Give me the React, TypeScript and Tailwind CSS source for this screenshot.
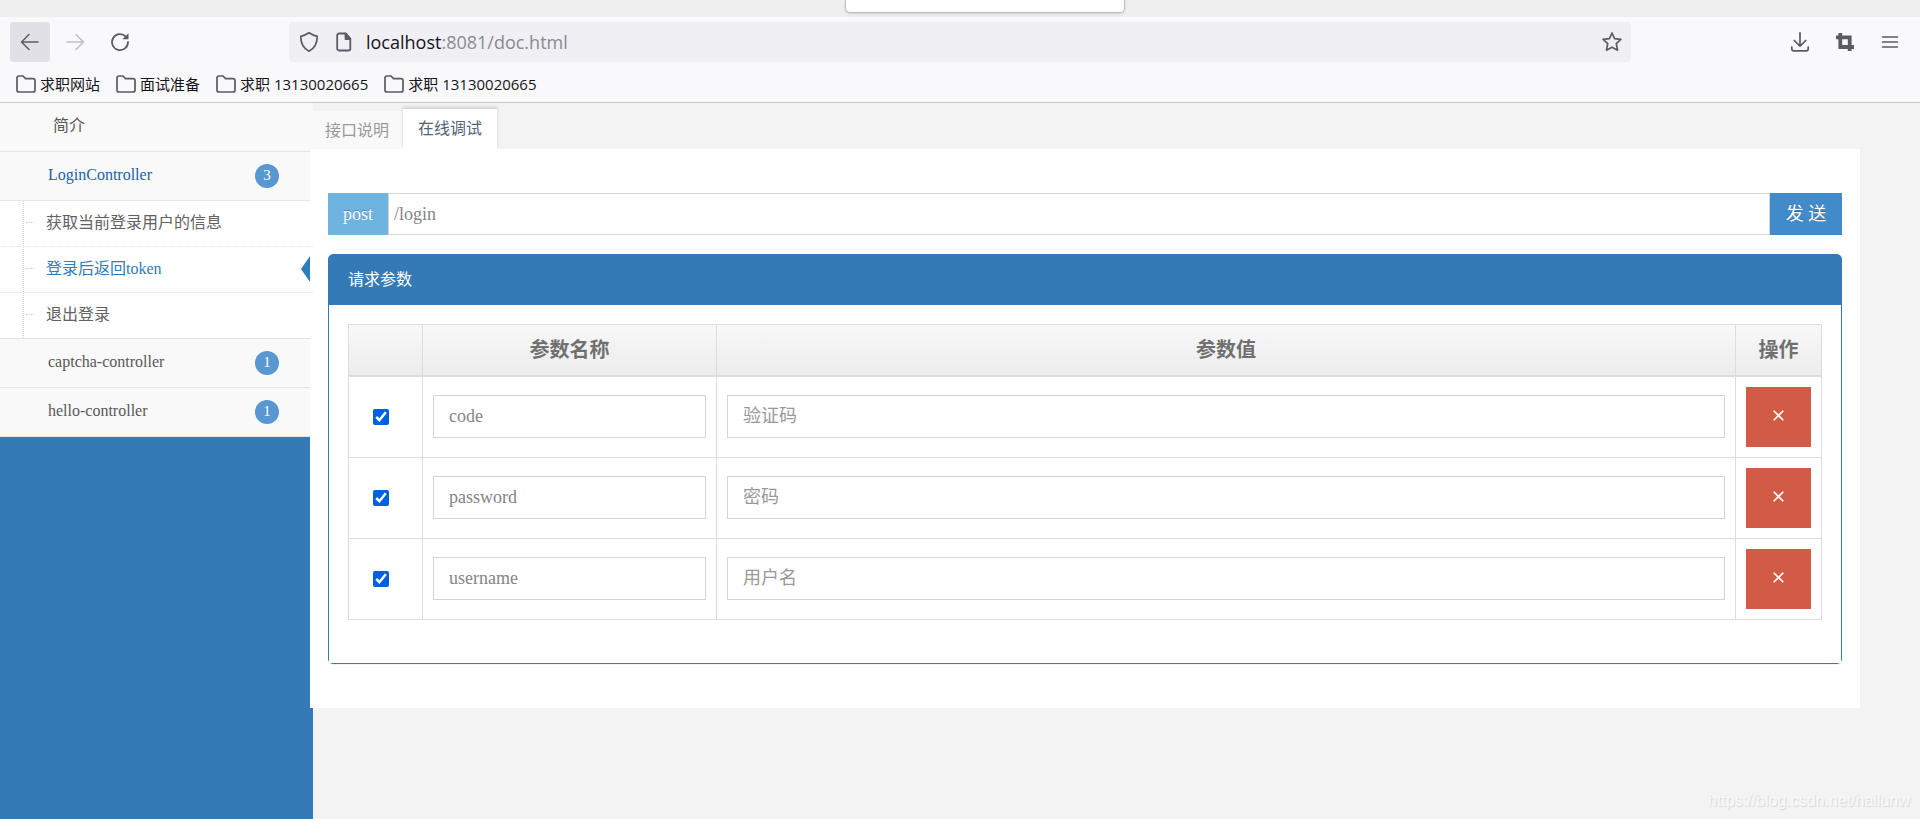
import React, { useState } from "react";

const bookmarks = ["求职网站", "面试准备", "求职 13130020665", "求职 13130020665"];

const endpoints = [
  { name: "获取当前登录用户的信息", active: false },
  { name: "登录后返回token", active: true },
  { name: "退出登录", active: false },
];

const initialParams = [
  { name: "code", hint: "验证码" },
  { name: "password", hint: "密码" },
  { name: "username", hint: "用户名" },
];

function Stroke({ d, size = 20, width = 1.5, className = "" }: { d: string; size?: number; width?: number; className?: string }) {
  return (
    <svg
      width={size}
      height={size}
      viewBox="0 0 20 20"
      fill="none"
      stroke="currentColor"
      strokeWidth={width}
      strokeLinecap="round"
      strokeLinejoin="round"
      className={className}
      aria-hidden="true"
    >
      <path d={d} />
    </svg>
  );
}

function BrowserChrome() {
  return (
    <header className="border-b border-[#cacaca] bg-[#f9f9fb] font-['Open_Sans','Noto_Sans_CJK_SC',sans-serif] text-[#5b5b66]">
      <div className="flex h-[17px] items-start justify-center bg-[#efefef] pl-[50px]">
        <div className="h-[13px] w-[280px] rounded-b-[5px] border border-t-0 border-[#bdbdca] bg-white shadow-sm" />
      </div>
      <div className="flex items-center pt-[5px] pr-[10px] pl-[10px]">
        <div className="flex w-[279px] shrink-0 items-center gap-[5px]">
          <button aria-label="后退" className="flex size-10 items-center justify-center rounded-[4px] bg-[#e0e0e6]">
            <Stroke d="M18 10H2M9 2.500L1.500 10L9 17.500" />
          </button>
          <button aria-label="前进" className="flex size-10 items-center justify-center text-[#bfbfc5]">
            <Stroke d="M2 10H18M11 2.500L18.500 10L11 17.500" />
          </button>
          <button aria-label="刷新" className="flex size-10 items-center justify-center">
            <svg width="20" height="20" viewBox="0 0 20 20" fill="none" stroke="currentColor" strokeWidth="1.800" strokeLinecap="round" aria-hidden="true">
              <path d="M15.600 4.400A8 8 0 1 0 18 10" />
              <path d="M18.500 1.200V7.300H12.400Z" fill="currentColor" stroke="none" />
            </svg>
          </button>
        </div>
        <div className="flex h-10 min-w-0 flex-1 items-center rounded-[4px] bg-[#efeff4] pr-[9px] pl-[10px]">
          <Stroke d="M10 0.800C12.500 2.500 15 3.600 18.200 4.300C18.300 11 16 16 10 19.200C4 16 1.700 11 1.800 4.300C5 3.600 7.500 2.500 10 0.800Z" width={1.700} />
          <svg width="20" height="20" viewBox="0 0 20 20" fill="none" stroke="currentColor" strokeWidth="1.800" strokeLinejoin="round" className="ml-[15px]" aria-hidden="true">
            <path d="M12 1.500H5A1.800 1.800 0 0 0 3.200 3.300V16.700A1.800 1.800 0 0 0 5 18.500H14.500A1.800 1.800 0 0 0 16.300 16.700V6.500L12 1.500Z" />
            <path d="M11.500 1.500V7H16.300Z" fill="currentColor" />
          </svg>
          <p className="ml-3 flex-1 text-[18px] leading-6 text-[#8a8a90]">
            <span className="text-[#15141a]">localhost</span>:8081/doc.html
          </p>
          <button aria-label="收藏">
            <Stroke d="M10 1L12.600 6.700L18.900 7.400L14.300 11.700L15.500 18.200L10 15.300L4.500 18.200L5.700 11.700L1.100 7.400L7.400 6.700Z" width={1.700} />
          </button>
        </div>
        <div className="flex w-[279px] shrink-0 items-center justify-end gap-[25px] pr-[10px]">
          <button aria-label="下载">
            <Stroke d="M10 0.800V14M4.200 8.500L10 14.200L15.800 8.500M1.800 15V16.800A2 2 0 0 0 3.800 18.800H16.200A2 2 0 0 0 18.200 16.800V15" width={1.700} />
          </button>
          <button aria-label="截图">
            <svg width="20" height="20" viewBox="0 0 20 20" fill="none" stroke="currentColor" strokeWidth="3.800" aria-hidden="true">
              <path d="M5.300 1V15H19M1 5.300H14.700V19" />
            </svg>
          </button>
          <button aria-label="菜单">
            <Stroke d="M2.500 5H17.500M2.500 10H17.500M2.500 15H17.500" />
          </button>
        </div>
      </div>
      <nav className="flex h-10 items-center gap-4 px-4 pt-1">
        {bookmarks.map((label, i) => (
          <a key={i} href="#" className="flex items-center gap-1 text-[15px] leading-5 text-[#15141a]">
            <Stroke d="M1 4A2 2 0 0 1 3 2H7L9.500 4.600H17A2 2 0 0 1 19 6.600V16A2 2 0 0 1 17 18H3A2 2 0 0 1 1 16Z" width={1.700} className="text-[#5b5b66]" />
            {label}
          </a>
        ))}
      </nav>
    </header>
  );
}

function Badge({ count }: { count: number }) {
  return (
    <span className="mt-0.5 flex size-6 items-center justify-center rounded-full bg-[#5997d0] pb-0.5 text-[15px] leading-5 text-white">
      {count}
    </span>
  );
}

function GroupLink({ label, count, open = false }: { label: string; count: number; open?: boolean }) {
  return (
    <a
      href="#"
      className={`flex h-[49px] items-center justify-between border-b border-[#e5e5e5] bg-[#f9f9f9] pr-[34px] pb-0.5 pl-12 ${open ? "text-[#1963aa]" : "text-[#585858]"}`}
    >
      {label}
      <Badge count={count} />
    </a>
  );
}

function Sidebar() {
  return (
    <aside className="w-[313px] shrink-0 bg-[#337ab7] text-[16px] leading-6 text-[#585858]">
      <a href="#" className="flex h-[49px] items-center border-b border-[#e5e5e5] bg-[#f9f9f9] pb-0.5 pl-[53px]">
        简介
      </a>
      <GroupLink label="LoginController" count={3} open />
      <div className="flex border-b border-[#e5e5e5] bg-white">
        <div className="w-6 shrink-0 border-r border-dotted border-[#ccd7e2]" />
        <ul className="-ml-6 flex-1 divide-y divide-dotted divide-[#e4e4e4]">
          {endpoints.map((e) => (
            <li key={e.name} className="relative">
              <a href="#" className={`flex h-[45px] items-center pb-0.5 pl-[26px] ${e.active ? "text-[#2b7dbc]" : "text-[#616161]"}`}>
                <span className="mr-3 w-2 border-t border-dotted border-[#bcd0e2]" />
                {e.name}
              </a>
              {e.active && (
                <svg width="9" height="26" viewBox="0 0 9 26" className="absolute top-[9px] right-[3px] fill-[#2b7dbc]" aria-hidden="true">
                  <path d="M9 0V26L0 13Z" />
                </svg>
              )}
            </li>
          ))}
        </ul>
      </div>
      <GroupLink label="captcha-controller" count={1} />
      <GroupLink label="hello-controller" count={1} />
    </aside>
  );
}

const cell = "border border-[#ddd] p-[10px]";
const field = "block h-[43px] w-full border border-[#d5d5d5] bg-white px-[15px] text-[18px] leading-6 text-[#858585] outline-none placeholder:text-[#999]";

function ParamsTable() {
  const [params, setParams] = useState(initialParams);
  return (
    <table className="w-full table-fixed border-collapse">
      <colgroup>
        <col className="w-[74px]" />
        <col className="w-[294px]" />
        <col />
        <col className="w-[86px]" />
      </colgroup>
      <thead>
        <tr className="h-[51px] bg-linear-to-b from-[#f8f8f8] to-[#ececec] text-[20px] leading-6 text-[#707070]">
          <th aria-label="选择" className="border border-b-2 border-[#ddd]" />
          <th className="border border-b-2 border-[#ddd]">参数名称</th>
          <th className="border border-b-2 border-[#ddd]">参数值</th>
          <th className="border border-b-2 border-[#ddd]">操作</th>
        </tr>
      </thead>
      <tbody>
        {params.map((p) => (
          <tr key={p.name}>
            <td className={cell}>
              <input type="checkbox" defaultChecked aria-label={p.name} className="ml-[14px] block size-4 accent-[#0060df]" />
            </td>
            <td className={cell}>
              <input type="text" defaultValue={p.name} aria-label="参数名称" className={field} />
            </td>
            <td className={cell}>
              <input type="text" placeholder={p.hint} aria-label={`${p.name} 参数值`} className={field} />
            </td>
            <td className={cell}>
              <button
                aria-label="删除"
                onClick={() => setParams(params.filter((q) => q !== p))}
                className="flex h-[60px] w-full items-center justify-center bg-[#d15b47] pb-0.5 text-white"
              >
                <svg width="11" height="11" viewBox="0 0 11 11" fill="none" stroke="currentColor" strokeWidth="1.600" aria-hidden="true">
                  <path d="M0.700 0.700L10.300 10.300M10.300 0.700L0.700 10.300" />
                </svg>
              </button>
            </td>
          </tr>
        ))}
      </tbody>
    </table>
  );
}

function DebugPanel() {
  return (
    <section className="-ml-[3px] bg-white px-[18px] pt-11 pb-11">
      <form className="flex h-[42px] text-[18px] leading-6" onSubmit={(e) => e.preventDefault()}>
        <span className="flex items-center bg-[#6fb3e0] px-[15px] text-white [text-shadow:0_-1px_0_rgba(0,0,0,0.25)]">post</span>
        <input aria-label="请求地址" defaultValue="/login" className="min-w-0 flex-1 border border-[#d5d5d5] px-[5px] text-[#858585] outline-none" />
        <button className="w-[72px] bg-[#428bca] text-white [text-shadow:0_-1px_0_rgba(0,0,0,0.25)]">发 送</button>
      </form>
      <div className="mt-[19px] rounded-[5px] border border-[#337ab7] bg-white shadow-[0_1px_1px_rgba(0,0,0,0.05)]">
        <h2 className="flex h-[50px] items-center rounded-t-[3px] bg-[#337ab7] px-[19px] text-[16px] leading-6 text-white">请求参数</h2>
        <div className="bg-white px-[19px] pt-[19px] pb-[43px]">
          <ParamsTable />
        </div>
      </div>
    </section>
  );
}

export default function App() {
  return (
    <div className="relative flex min-h-screen flex-col bg-[#f3f3f3] font-['Liberation_Serif','Noto_Sans_CJK_SC',serif]">
      <BrowserChrome />
      <div className="flex flex-1">
        <Sidebar />
        <main className="min-w-0 flex-1 pr-[60px]">
          <nav className="flex h-[46px] items-end text-[16px] leading-6">
            <button className="h-[38px] bg-[#f9f9f9] pt-0.5 pr-[14px] pl-3 text-[#999]">接口说明</button>
            <button className="h-10 bg-white px-[15px] text-[#576373] shadow-[0_-2px_3px_0_rgba(0,0,0,0.15)]">在线调试</button>
          </nav>
          <DebugPanel />
        </main>
      </div>
      <p className="absolute right-[10px] bottom-[6px] font-['Liberation_Sans',sans-serif] text-[16px] leading-6 text-[#f8f8f8] [text-shadow:1px_1px_1px_rgba(0,0,0,0.12)]">
        https://blog.csdn.net/hailunw
      </p>
    </div>
  );
}
